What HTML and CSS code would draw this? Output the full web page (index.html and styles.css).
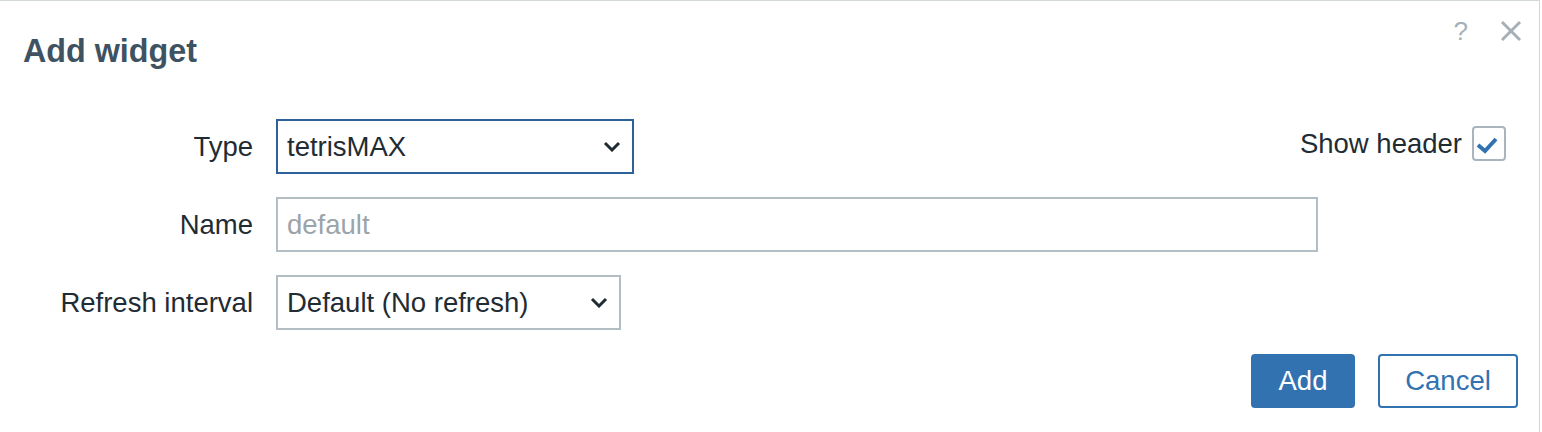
FILE: index.html
```html
<!DOCTYPE html>
<html lang="en">
<head>
    <meta charset="UTF-8">
    <meta name="viewport" content="width=device-width, initial-scale=1.0">
    <title>Add widget</title>
    <link rel="stylesheet" href="styles.css">
</head>
<body>
    <div class="dialog">
        <div class="dialog-header">
            <h4 class="dialog-title">Add widget</h4>
            <div class="dialog-controls">
                <span class="btn-help">?</span>
                <svg class="btn-close" width="22" height="22" viewBox="0 0 22 22">
                    <path d="M2 2 L20 20 M20 2 L2 20" stroke="#a7b0b6" stroke-width="3" fill="none"/>
                </svg>
            </div>
        </div>

        <form class="widget-form">
            <label class="form-label" for="type">Type</label>
            <div class="form-field type-row">
                <div class="select-wrap">
                    <select id="type" class="select focused type-select">
                        <option>tetrisMAX</option>
                    </select>
                    <svg class="chevron" width="18" height="11" viewBox="0 0 18 11">
                        <path d="M2 2 L9 9 L16 2" stroke="#1f2c33" stroke-width="3" fill="none"/>
                    </svg>
                </div>
                <label class="show-header">
                    Show header
                    <span class="checkbox">
                        <svg width="30" height="31" viewBox="0 0 30 31">
                            <path d="M4 17 L11 23 L22 11" stroke="#3172b3" stroke-width="4" fill="none"/>
                        </svg>
                    </span>
                </label>
            </div>

            <label class="form-label" for="name">Name</label>
            <div class="form-field">
                <input id="name" class="text-input" type="text" placeholder="default">
            </div>

            <label class="form-label" for="refresh">Refresh interval</label>
            <div class="form-field">
                <div class="select-wrap">
                    <select id="refresh" class="select refresh-select">
                        <option>Default (No refresh)</option>
                    </select>
                    <svg class="chevron" width="18" height="11" viewBox="0 0 18 11">
                        <path d="M2 2 L9 9 L16 2" stroke="#1f2c33" stroke-width="3" fill="none"/>
                    </svg>
                </div>
            </div>
        </form>

        <div class="dialog-footer">
            <button class="btn-primary" type="button">Add</button>
            <button class="btn-alt" type="button">Cancel</button>
        </div>
    </div>
</body>
</html>
```

FILE: styles.css
```css
body {
    margin: 0;
    font-family: "Liberation Sans", Arial, sans-serif;
    background: white;
    color: #1f2c33;
}
.dialog {
    width: 1539px;
    height: 431px;
    border-top: 1px solid #d3d8db;
    border-right: 1px solid #d3d8db;
    background: white;
}
.dialog-header {
    display: flex;
    justify-content: space-between;
    align-items: flex-start;
    padding: 30px 17px 0 23px;
}
.dialog-title {
    margin: 0;
    font-size: 32.3px;
    line-height: 40px;
    font-weight: bold;
    color: #3e5262;
}
.dialog-controls {
    display: flex;
    align-items: center;
    gap: 32px;
    margin-top: -11px;
}
.btn-help {
    font-size: 26px;
    line-height: 22px;
    color: #a7b0b6;
}
.btn-close { display: block; }

.widget-form {
    display: grid;
    grid-template-columns: 253px 1fr;
    column-gap: 23px;
    row-gap: 23px;
    align-items: center;
    margin-top: 48px;
    padding-right: 21px;
}
.form-label {
    text-align: right;
    font-size: 27.5px;
    color: #1f2c33;
}
.form-field {
    display: flex;
    align-items: center;
}
.type-row { justify-content: space-between; }

.select-wrap { position: relative; }
.select,
.text-input {
    box-sizing: border-box;
    height: 55px;
    border: 2px solid #b2bec4;
    background: white;
    font-family: "Liberation Sans", Arial, sans-serif;
    font-size: 27.5px;
    color: #1f2c33;
    padding: 0 9px;
    margin: 0;
    border-radius: 0;
    outline: none;
}
.select {
    appearance: none;
    -webkit-appearance: none;
}
.select.focused { border-color: #2c6299; }
.type-select { width: 358px; }
.refresh-select { width: 345px; }
.text-input { width: 1042px; }
.text-input::placeholder { color: #9ba4a9; }
.chevron {
    position: absolute;
    right: 13px;
    top: 22px;
    pointer-events: none;
}

.show-header {
    display: flex;
    align-items: center;
    gap: 10px;
    font-size: 27.5px;
    margin-right: 12px;
    margin-top: -6px;
}
.checkbox {
    box-sizing: border-box;
    width: 34px;
    height: 35px;
    border: 2px solid #a9b5be;
    border-radius: 4px;
    display: flex;
    align-items: center;
    justify-content: center;
}
.checkbox svg { display: block; }

.dialog-footer {
    display: flex;
    justify-content: flex-end;
    gap: 23px;
    margin-top: 24px;
    padding-right: 21px;
}
.dialog-footer button {
    box-sizing: border-box;
    height: 54px;
    font-family: "Liberation Sans", Arial, sans-serif;
    font-size: 27.5px;
    border-radius: 4px;
    cursor: pointer;
}
.btn-primary {
    width: 104px;
    background: #3272b1;
    border: 2px solid #3272b1;
    color: white;
}
.btn-alt {
    width: 140px;
    background: white;
    border: 2px solid #3272b1;
    color: #3272b1;
}
```
